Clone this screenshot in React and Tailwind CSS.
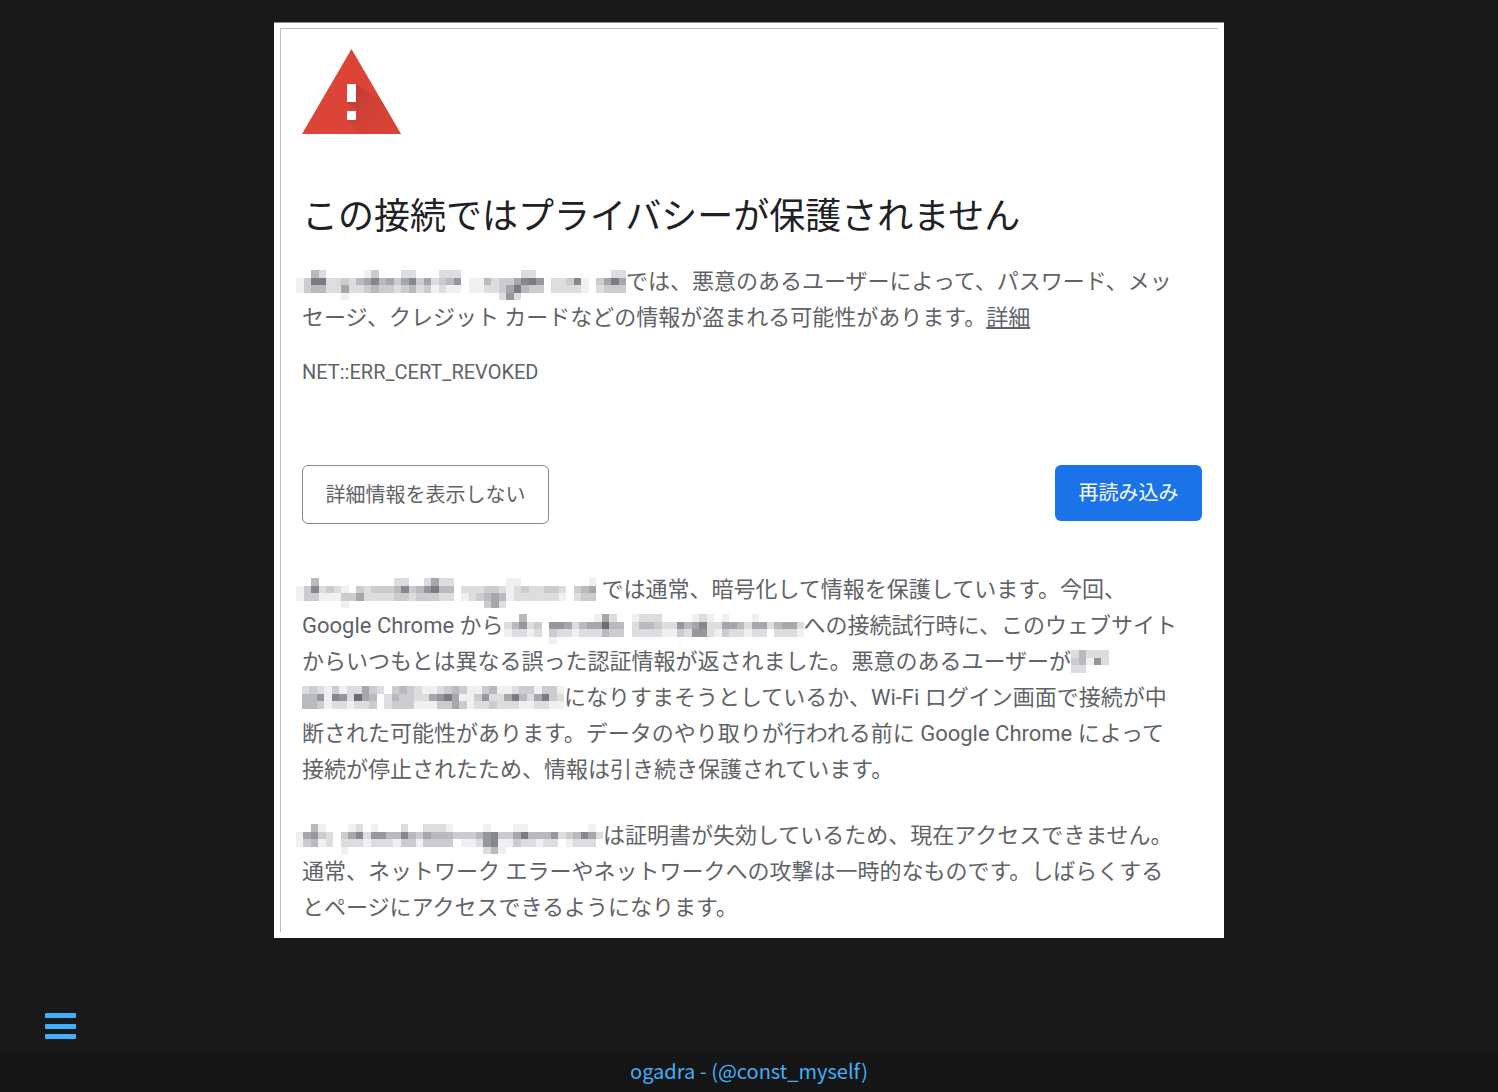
// App.jsx
const NIVELES = [
  "#ffffff",
  "#f0f0f1",
  "#dcddde",
  "#cbcccf",
  "#b9babe",
  "#a6a7ab",
  "#96979c",
  "#87888e",
  "#7b7c83",
  "#6b6c72",
];

// Each string is one row of blocks, each digit is how dark the block is
const HOST_A = [
  "00420000013000220002220000000022000000000022",
  "13882232457453573523460114233578602237103585",
  "13442252234332342312110112235843302222102333",
  "00000010000000000000000000026200000000000000",
];

const HOST_B = [
  "0040000000000220025220000000110000000001",
  "1372321032333473468440222332123223320345",
  "1331113352222332333220123454122222210233",
  "0000001000000000000000000352000000000000",
];

const HOST_C = [
  "0040000000001520012220000121010001000000",
  "2462306652455944024432264572255425524552",
  "1221203221222433022221132662132212202221",
  "0000001000000000000000000000000000000000",
];

const HOST_D = ["24222", "34162", "22000", "00000"];

const HOST_E = [
  "23213122532034321123431134112331331",
  "44617629540243322568511362258425832",
  "44312212230233311133531223222112211",
  "00000000000000000000000000000000000",
];

const HOST_F = [
  "00410001201000200222100001000110000000010",
  "15632035726644743544433346733584446234752",
  "13412022212221331333301126711322122012220",
  "00000010000000000000000002410000000000000",
];

const WIDTHS = {
  5: "w-[38px]",
  35: "w-[262px]",
  40: "w-[300px]",
  41: "w-[307px]",
  44: "w-[330px]",
};

function Mosaic({ rows, outdent = false }) {
  const cols = rows[0].length;

  return (
    <svg
      viewBox={`0 0 ${cols} ${rows.length}`}
      preserveAspectRatio="none"
      shapeRendering="crispEdges"
      aria-hidden="true"
      className={`inline-block align-top mt-1.5 h-[30px] ${WIDTHS[cols]} ${outdent ? "-ml-1.5" : ""}`}
    >
      {rows.map((row, y) =>
        [...row].map((level, x) =>
          level === "0" ? null : (
            <rect key={`${x}-${y}`} x={x} y={y} width="1" height="1" fill={NIVELES[level]} />
          )
        )
      )}
    </svg>
  );
}

function WarningIcon() {
  return (
    <svg viewBox="0 0 99 85" className="block w-[99px] h-[85px]" aria-hidden="true">
      <defs>
        <linearGradient id="shade" gradientUnits="userSpaceOnUse" x1="50" y1="44" x2="76" y2="70">
          <stop offset="0" stopColor="#b5382e" stopOpacity="0.7" />
          <stop offset="1" stopColor="#cc4036" stopOpacity="0.35" />
        </linearGradient>
      </defs>
      <path d="M49.5 0 99 85H0z" fill="#db4437" />
      <path d="M54 35 79 51 99 85H59L45 71H54V62L45 53H54z" fill="url(#shade)" />
      <path d="M45 35h9v18h-9zM45 62h9v9h-9z" fill="#fff" />
    </svg>
  );
}

export default function App() {
  return (
    <div className="min-h-screen flex flex-col bg-[#191919] font-['Roboto','Noto_Sans_CJK_JP',sans-serif]">
      {/* Slide */}
      <main className="w-full max-w-[950px] mx-auto mt-[22px] bg-white border-t border-[#8c8c8c] p-[6px] pt-[5px]">
        <div className="border-t border-l border-[#bdbdbd] pl-[21px] pr-4 pt-5 pb-[6px] text-[#5f6368] text-[22px] leading-[36px] whitespace-nowrap">
          <WarningIcon />

          <h1 className="mt-[57px] text-[36px] leading-[52px] font-normal text-[#202124]">
            この接続ではプライバシーが保護されません
          </h1>

          <p className="mt-[21px]">
            <Mosaic rows={HOST_A} outdent />
            では、悪意のあるユーザーによって、パスワード、メッ
            <br />
            セージ、クレジット カードなどの情報が盗まれる可能性があります。
            <a href="#details" className="underline underline-offset-2">詳細</a>
          </p>

          <p className="mt-6 text-[20px] leading-6">NET::ERR_CERT_REVOKED</p>

          {/* Buttons */}
          <div className="mt-[81px] flex items-start justify-between text-[20px]">
            <button
              type="button"
              className="w-[247px] h-[59px] border border-[#85888c] rounded-md"
            >
              詳細情報を表示しない
            </button>
            <button
              type="button"
              className="w-[147px] h-[56px] rounded-md bg-[#1a73e8] text-white"
            >
              再読み込み
            </button>
          </div>

          <p className="mt-12">
            <Mosaic rows={HOST_B} outdent /> では通常、暗号化して情報を保護しています。今回、
            <br />
            Google Chrome から
            <Mosaic rows={HOST_C} />
            への接続試行時に、このウェブサイト
            <br />
            からいつもとは異なる誤った認証情報が返されました。悪意のあるユーザーが
            <Mosaic rows={HOST_D} />
            <br />
            <Mosaic rows={HOST_E} />
            になりすまそうとしているか、Wi-Fi ログイン画面で接続が中
            <br />
            断された可能性があります。データのやり取りが行われる前に Google Chrome によって
            <br />
            接続が停止されたため、情報は引き続き保護されています。
          </p>

          <p className="mt-[30px]">
            <Mosaic rows={HOST_F} outdent />
            は証明書が失効しているため、現在アクセスできません。
            <br />
            通常、ネットワーク エラーやネットワークへの攻撃は一時的なものです。しばらくする
            <br />
            とページにアクセスできるようになります。
          </p>
        </div>
      </main>

      {/* Menu */}
      <nav className="mt-auto px-[45px] pt-6 pb-[13px]">
        <button type="button" aria-label="Menu" className="block">
          <svg viewBox="0 0 31 26" className="block w-[31px] h-[26px]" fill="#42affa">
            <rect width="31" height="5" rx="1" />
            <rect y="11" width="31" height="5" rx="1" />
            <rect y="21" width="31" height="5" rx="1" />
          </svg>
        </button>
      </nav>

      <footer className="h-10 bg-[#151515] text-center text-[20px] leading-[38px] text-[#42affa] font-['Noto_Sans_CJK_JP',sans-serif]">
        <a href="#author">ogadra - (@const_myself)</a>
      </footer>
    </div>
  );
}
